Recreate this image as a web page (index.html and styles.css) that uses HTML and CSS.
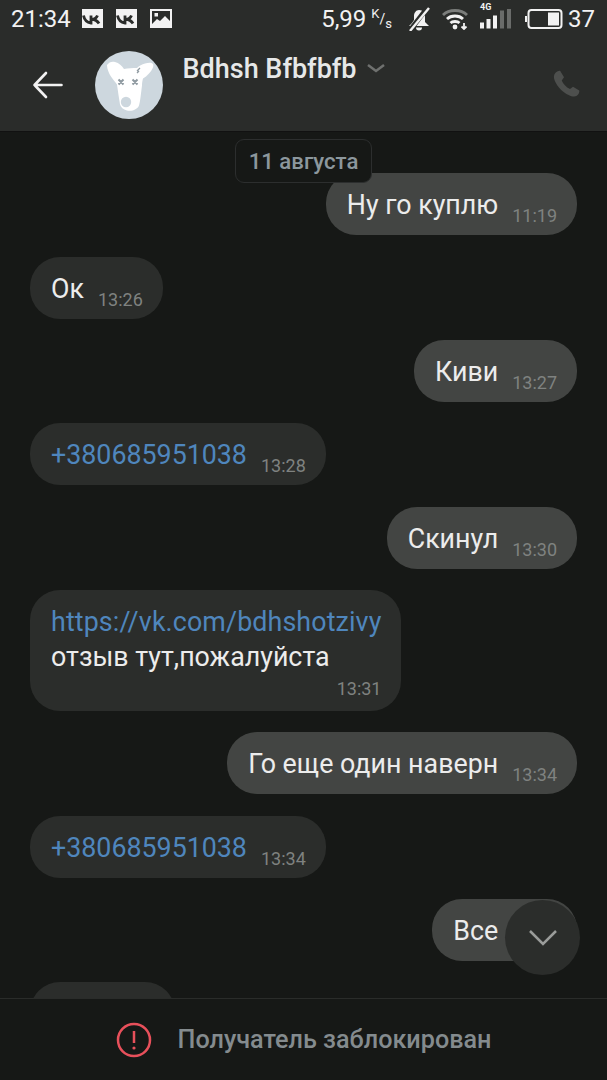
FILE: index.html
```html
<!DOCTYPE html>
<html lang="ru">

<head>
  <meta charset="UTF-8">
  <meta name="viewport" content="width=device-width, initial-scale=1.0">
  <title>Bdhsh Bfbfbfb</title>
  <link rel="stylesheet" href="styles.css">
</head>

<body>
  <div class="top-bar">
    <div class="status-bar">
      <span class="clock">21:34</span>
      <svg class="notif-icon" width="21" height="19" viewBox="0 0 21 19" fill="none">
        <rect width="21" height="19" fill="#f2f2f2"/>
        <path stroke="#2a2c2a" stroke-width="2.800" d="M1.500 6.500c1 5 3.500 7 7.500 7.500V6.500M9 10.500c3 0 5.500-1.500 6.500-4M9.500 10c3 .5 6 2 7.500 4.500"/>
      </svg>
      <svg class="notif-icon" width="21" height="19" viewBox="0 0 21 19" fill="none">
        <rect width="21" height="19" fill="#f2f2f2"/>
        <path stroke="#2a2c2a" stroke-width="2.800" d="M1.500 6.500c1 5 3.500 7 7.500 7.500V6.500M9 10.500c3 0 5.500-1.500 6.500-4M9.500 10c3 .5 6 2 7.500 4.500"/>
      </svg>
      <svg class="notif-icon" width="22" height="19" viewBox="0 0 22 19">
        <rect width="22" height="19" fill="#f2f2f2"/>
        <path fill="#2a2c2a" d="M2 2h18v10l-5-5-5 5-3-2-5 5z"/>
        <rect x="4.500" y="4" width="3.500" height="3.500" fill="#f2f2f2"/>
      </svg>
      <span class="status-spacer"></span>
      <span class="speed">5,99<span class="speed-unit"><sup>K</sup>/<sub>s</sub></span></span>
      <svg class="bell" width="22" height="24" viewBox="0 0 22 24">
        <path fill="#f2f2f2" d="M11 3c4 0 6 3 6 7v5l4 4H1l3-3 2-3V9c0-3 2-6 5-6z"/>
        <path fill="#f2f2f2" d="M8 20.500h6a3 3 0 0 1-6 0z"/>
        <path stroke="#2a2c2a" stroke-width="5" d="M20 0L3 22"/>
        <path stroke="#f2f2f2" stroke-width="2.400" d="M21 1L2 24"/>
      </svg>
      <svg class="wifi" width="26" height="22" viewBox="0 0 26 22" fill="none">
        <path stroke="#7b7d7b" stroke-width="2.800" d="M1 7c6-6 18-6 24 0"/>
        <path stroke="#f2f2f2" stroke-width="2.800" d="M5 11c4-4 12-4 16 0"/>
        <path stroke="#f2f2f2" stroke-width="2.800" d="M8.500 15c2-2 7-2 9 0"/>
        <circle cx="13" cy="19" r="2.400" fill="#f2f2f2"/>
        <path stroke="#f2f2f2" stroke-width="1.800" d="M22 15v6M19.500 18.500l2.500 2.500 2.500-2.500"/>
      </svg>
      <span class="signal">
        <span class="signal-label">4G</span>
        <svg width="31" height="20" viewBox="0 0 31 20">
          <rect x="0" y="13.500" width="4" height="6" fill="#f2f2f2"/>
          <rect x="6.500" y="10" width="4" height="9.500" fill="#f2f2f2"/>
          <rect x="13" y="6.500" width="4" height="13" fill="#f2f2f2"/>
          <rect x="20" y="1.500" width="4" height="18" fill="#6a6c6a"/>
          <rect x="27" y="0" width="4" height="19.500" fill="#6a6c6a"/>
        </svg>
      </span>
      <svg class="battery" width="38" height="20" viewBox="0 0 38 20">
        <rect x="3.500" y="1" width="33" height="18" rx="3" fill="none" stroke="#f2f2f2" stroke-width="2"/>
        <rect x="0" y="7" width="2" height="6" fill="#f2f2f2"/>
        <rect x="23" y="3.500" width="11" height="13" fill="#f2f2f2"/>
      </svg>
      <span class="battery-level">37</span>
    </div>

    <div class="toolbar">
      <svg class="back" width="32" height="32" viewBox="0 0 32 32" fill="none">
        <path stroke="#f2f2f2" stroke-width="2.600" stroke-linecap="round" stroke-linejoin="round" d="M2.500 16h27M14 4L2.500 16 14 28"/>
      </svg>
      <svg class="avatar" width="68" height="68" viewBox="0 0 68 68">
        <circle cx="34" cy="34" r="34" fill="#cdd7de"/>
        <path fill="#fff" d="M12 14c2-3 5-4 8-3 4 1 7 4 9 7 4-1 9-1 13-1 2-2 5-4 8-4.500 3-.5 6-1.500 8 .5 1 2 0 5-4 9.500-2 2-4 4-6 5-.5 2-1 4-1 7-1 7-1.500 15-3 20-1.500 4-7 6-12 5-4-1-6-3-7-6-1-6-2-13-3-20-2-3-5-6-7-9.500-1-2-3-6-3-9.500z"/>
        <circle cx="31" cy="51" r="5.200" fill="#cdd7de"/>
        <path stroke="#8f9aa1" stroke-width="2" d="M23.500 28.500l5 5M28.500 28.500l-5 5M37.500 28.500l5 5M42.500 28.500l-5 5"/>
        <path stroke="#8f9aa1" stroke-width="1.300" fill="none" d="M45 17l-3 3M42 22l2-2"/>
      </svg>
      <div class="peer-name">
        <span>Bdhsh Bfbfbfb</span>
        <svg width="18" height="10" viewBox="0 0 18 10" fill="none">
          <path stroke="#6f716f" stroke-width="2.500" d="M1 1l8 6 8-6"/>
        </svg>
      </div>
      <svg class="call" width="30" height="30" viewBox="0 0 24 24">
        <path fill="#4d4f4d" d="M6.600 1.500l3 5-1.800 2.600c1 2.700 3.500 5.400 6.600 6.800l2.400-1.700 5 2.900c.4.800-.5 3.400-2 4.300-1.600 1-4 .6-6.500-.7C8.700 18.700 4.200 14 2.300 9.500 1.200 7 1.300 4.800 2.500 3.300 3.500 2 5.700 1.100 6.600 1.500z"/>
      </svg>
    </div>
  </div>

  <div class="chat">
    <div class="date-chip">11 августа</div>

    <div class="msg out">Ну го куплю<span class="time">11:19</span></div>
    <div class="msg in">Ок<span class="time">13:26</span></div>
    <div class="msg out">Киви<span class="time">13:27</span></div>
    <div class="msg in"><span class="link">+380685951038</span><span class="time">13:28</span></div>
    <div class="msg out">Скинул<span class="time">13:30</span></div>
    <div class="msg in multi">
      <span class="link">https://vk.com/bdhshotzivy</span>
      <span>отзыв тут,пожалуйста</span>
      <span class="time">13:31</span>
    </div>
    <div class="msg out">Го еще один наверн<span class="time">13:34</span></div>
    <div class="msg in"><span class="link">+380685951038</span><span class="time">13:34</span></div>
    <div class="msg out">Все<span class="time">13:35</span></div>
    <div class="msg in cut"></div>

    <button class="scroll-down">
      <svg width="30" height="18" viewBox="0 0 30 18" fill="none">
        <path stroke="#9a9c9a" stroke-width="2.500" d="M2 2l13 13L28 2"/>
      </svg>
    </button>
  </div>

  <div class="blocked">
    <svg width="36" height="36" viewBox="0 0 36 36" fill="none">
      <circle cx="18" cy="18" r="16" stroke="#e8505b" stroke-width="2.500"/>
      <path stroke="#e8505b" stroke-width="2.500" d="M18 9v12"/>
      <circle cx="18" cy="26" r="1.600" fill="#e8505b"/>
    </svg>
    <span>Получатель заблокирован</span>
  </div>
</body>

</html>
```

FILE: styles.css
```css
body {
  font-family: Roboto, 'Noto Sans', sans-serif;
  margin: 0;
  padding: 0;
  display: flex;
  flex-direction: column;
  height: 100vh;
  overflow: hidden;
  background-color: #161816;
  color: #ececec;
}

.top-bar {
  background-color: #2a2c2a;
  height: 132px;
  flex-shrink: 0;
  border-bottom: 1px solid #111;
  box-sizing: border-box;
}

.status-bar {
  display: flex;
  align-items: center;
  height: 37px;
  padding: 0 12px 0 11px;
  font-size: 24px;
  color: #f2f2f2;
}

.clock {
  margin-right: 11px;
}

.notif-icon {
  margin-right: 13px;
}

.status-spacer {
  flex: 1;
}

.speed {
  display: flex;
  align-items: center;
}

.speed-unit {
  font-size: 14px;
  margin-left: 5px;
  margin-right: 16px;
}

.speed-unit sup, .speed-unit sub {
  font-size: 13px;
  line-height: 0;
}

.bell {
  margin-right: 12px;
}

.wifi {
  margin-right: 12px;
}

.signal {
  position: relative;
  display: flex;
  margin-right: 14px;
}

.signal-label {
  position: absolute;
  top: -7px;
  left: 0;
  font-size: 9px;
  font-weight: 700;
}

.battery {
  margin-right: 5px;
}

.toolbar {
  display: flex;
  align-items: flex-start;
  height: 94px;
}

.back {
  margin: 32px 0 0 32px;
}

.avatar {
  margin: 14px 0 0 30.500px;
}

.peer-name {
  display: flex;
  align-items: center;
  gap: 10px;
  margin: 15px 0 0 20px;
  font-size: 27px;
  font-weight: 500;
  line-height: 34px;
  color: #e6e8e8;
}

.call {
  margin: 32px 25px 0 auto;
}

.chat {
  flex: 1;
  min-height: 0;
  position: relative;
  overflow: hidden;
  display: flex;
  flex-direction: column;
  align-items: flex-start;
  gap: 21.400px;
  padding: 41.300px 30px 0 30px;
}

.date-chip {
  position: absolute;
  top: 7px;
  left: 235px;
  z-index: 2;
  width: 137px;
  height: 44px;
  box-sizing: border-box;
  background-color: #161816;
  border: 1px solid #2c2e2e;
  border-radius: 9px;
  color: #8c979d;
  font-size: 22.200px;
  font-weight: 500;
  line-height: 42px;
  text-align: center;
}

.msg {
  flex-shrink: 0;
  box-sizing: border-box;
  height: 62px;
  border-radius: 30px;
  padding: 2px 20px 0 21px;
  display: flex;
  align-items: center;
  font-size: 26.800px;
  white-space: nowrap;
}

.msg.out {
  align-self: flex-end;
  background-color: #434543;
}

.msg.in {
  background-color: #2b2d2b;
}

.time {
  align-self: flex-end;
  margin: 0 0 9px 14px;
  font-size: 18px;
  line-height: 20px;
  color: #7f8280;
}

.link {
  color: #4f86bd;
}

.msg.multi {
  height: 120.600px;
  flex-direction: column;
  align-items: flex-start;
  justify-content: flex-start;
  padding-top: 15px;
  line-height: 35px;
}

.msg.multi .link {
  letter-spacing: .12px;
}

.msg.multi .time {
  margin: 4px 0 0 0;
}

.msg.cut {
  width: 145px;
}

.scroll-down {
  position: absolute;
  top: 768px;
  left: 505px;
  width: 75px;
  height: 75px;
  padding: 0;
  border: none;
  border-radius: 50%;
  background-color: #2b2d2b;
  display: flex;
  align-items: center;
  justify-content: center;
}

.blocked {
  flex-shrink: 0;
  height: 82px;
  box-sizing: border-box;
  border-top: 1px solid #2a2c2a;
  background-color: #161816;
  display: flex;
  align-items: center;
  justify-content: center;
  gap: 26px;
  font-size: 25.200px;
  font-weight: 500;
  color: #848b8e;
}
```
